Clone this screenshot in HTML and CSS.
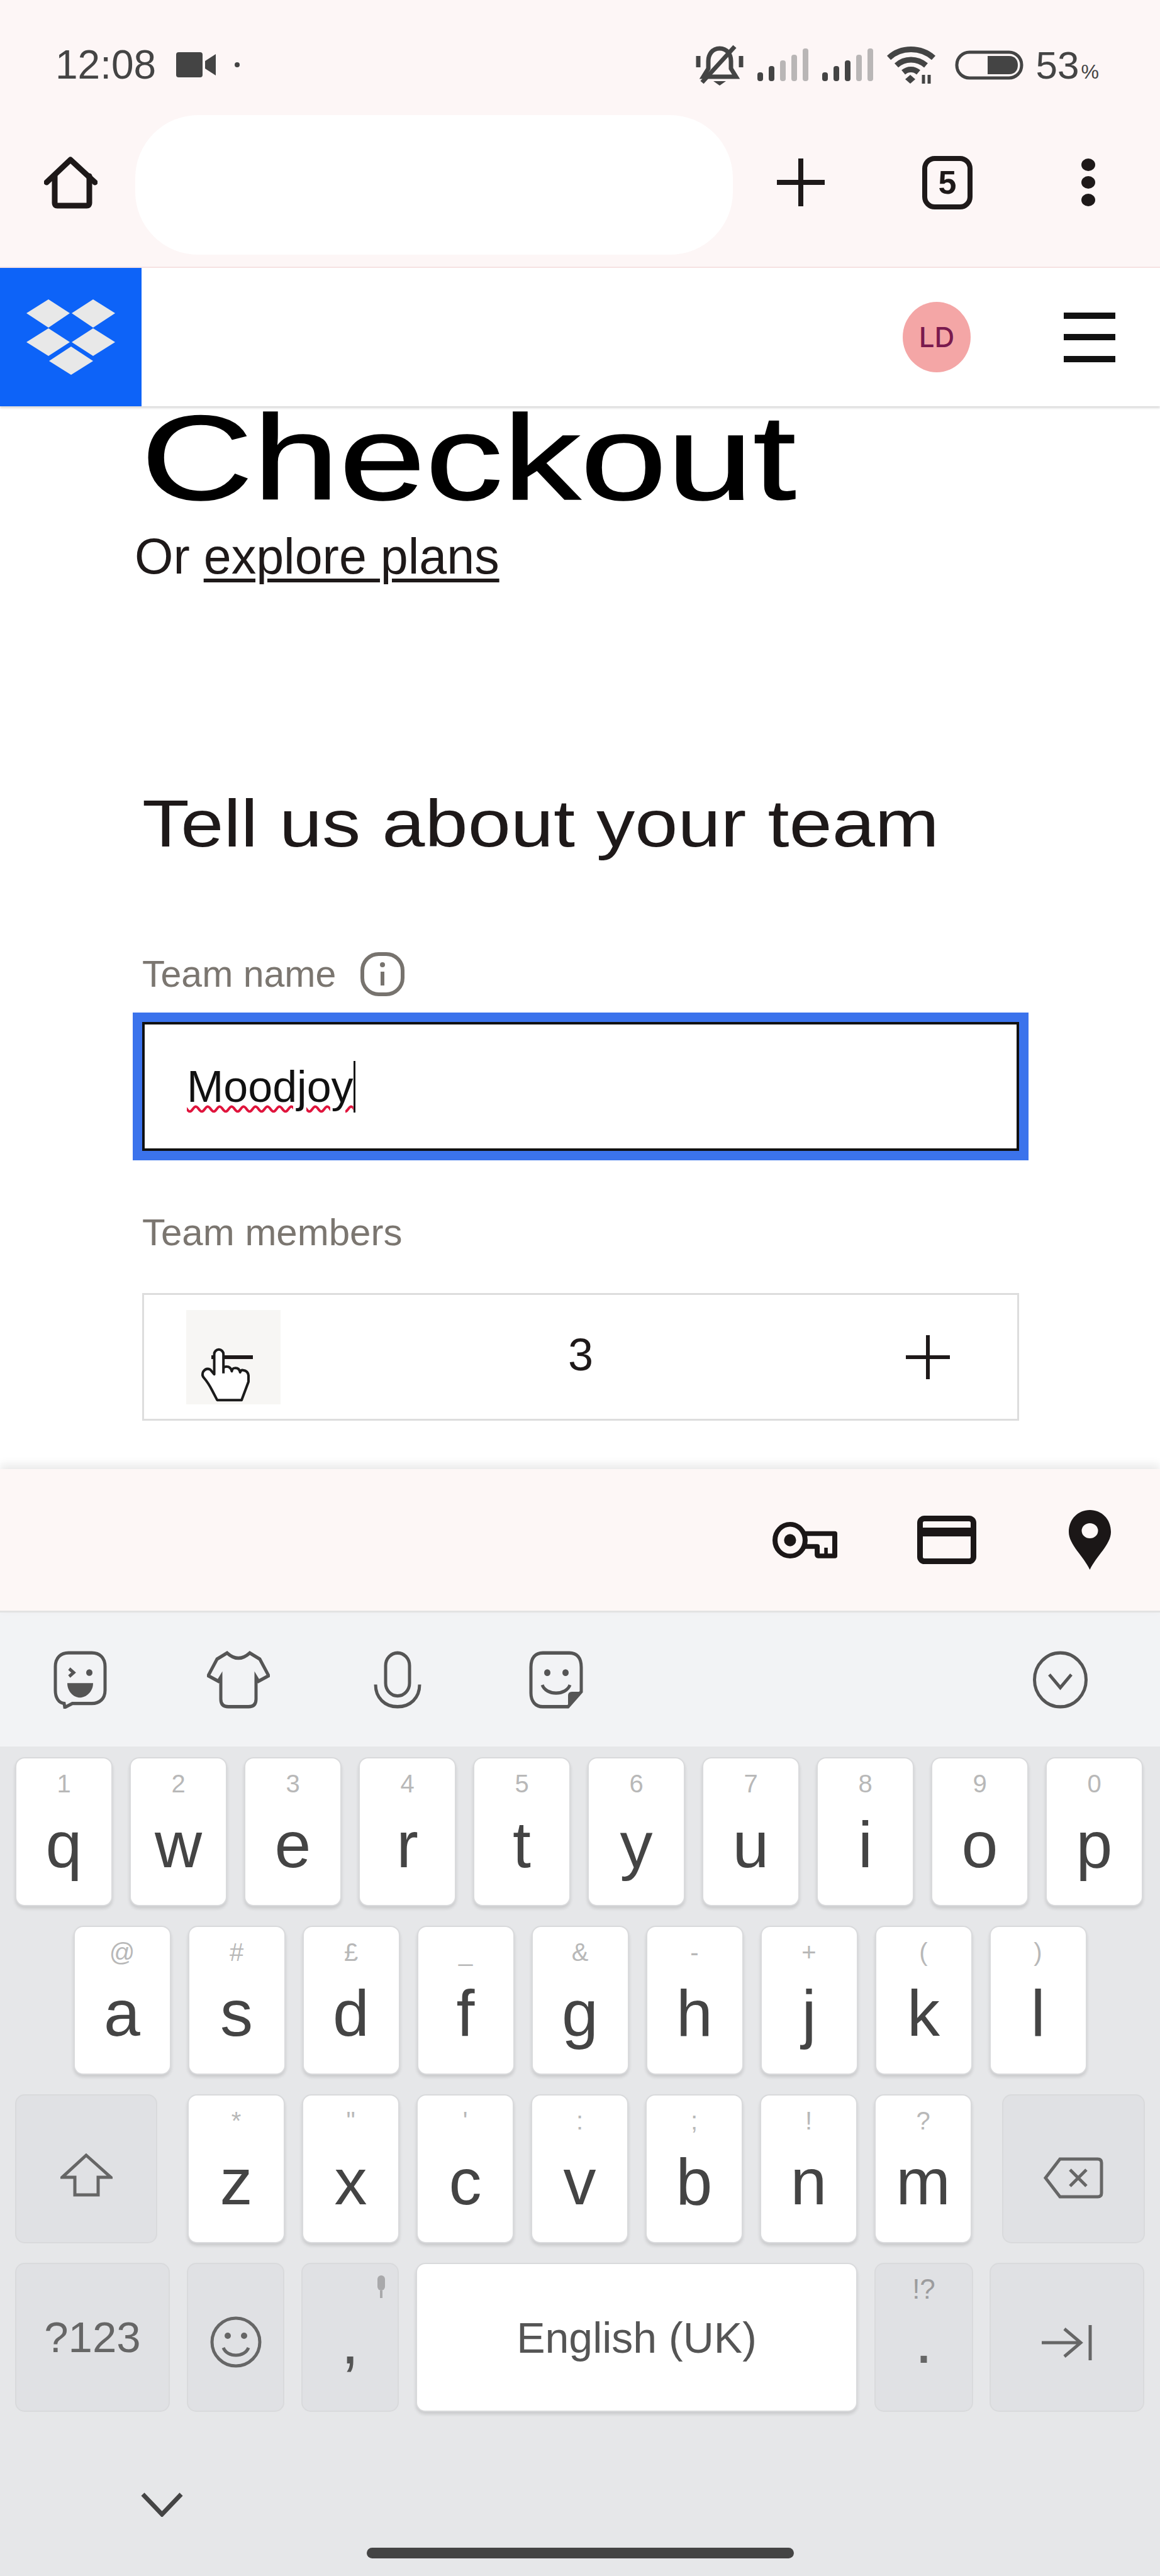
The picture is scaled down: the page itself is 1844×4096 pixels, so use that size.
FILE: index.html
```html
<!DOCTYPE html>
<html lang="en">
<head>
    <meta charset="UTF-8">
    <title>Checkout</title>
    <link rel="stylesheet" href="styles.css">
</head>
<body>

<div class="chrome">
    <div class="status-bar">
        <span class="time">12:08</span>
        <svg class="cam-icon" viewBox="0 0 63 40"><rect x="0" y="0" width="42" height="40" rx="4"/><path d="M46 14 63 3V37L46 26Z"/></svg>
        <span class="status-dot"></span>
        <div class="status-right">
            <svg class="bell-icon" viewBox="0 0 76 65"><path d="M38 6C26 6 20 16 20 26V38L12 51H64L56 38V26C56 16 50 6 38 6Z"/><path d="M10 60 62 3" class="slash"/><path d="M4 18V36M72 18V36" class="ticks"/><path d="M28 58H48L38 65Z" class="fill"/></svg>
            <svg class="signal-icon" viewBox="0 0 81 52"><rect x="0" y="38" width="9" height="14" rx="4"/><rect x="18" y="28" width="9" height="24" rx="4"/><rect class="off" x="36" y="19" width="9" height="33" rx="4"/><rect class="off" x="54" y="10" width="9" height="42" rx="4"/><rect class="off" x="72" y="0" width="9" height="52" rx="4"/></svg>
            <svg class="signal-icon" viewBox="0 0 81 52"><rect x="0" y="38" width="9" height="14" rx="4"/><rect x="18" y="28" width="9" height="24" rx="4"/><rect x="36" y="19" width="9" height="33" rx="4"/><rect class="off" x="54" y="10" width="9" height="42" rx="4"/><rect class="off" x="72" y="0" width="9" height="52" rx="4"/></svg>
            <svg class="wifi-icon" viewBox="0 0 79 60"><path d="M3 19C22 1 54 1 74 19" /><path d="M15 31C28 19 48 19 62 31"/><path d="M26 42C33 36 43 36 50 42"/><path class="fill" d="M37 46 45 53 37 60 29 53Z"/><path d="M58 46V60M67 46V60" class="thin"/></svg>
            <svg class="battery-icon" viewBox="0 0 109 47"><rect x="3" y="3" width="103" height="41" rx="20"/><path class="fill" d="M52 9H86C96 9 100 16 100 23.500S96 38 86 38H52Z"/></svg>
            <span class="battery-text">53<small>%</small></span>
        </div>
    </div>
    <div class="toolbar">
        <svg class="home-icon" viewBox="0 0 85 85"><path d="M4 42 42 6 81 42"/><path d="M17 32V75Q17 79 21 79H68Q72 79 72 75V32"/></svg>
        <div class="url-pill"></div>
        <svg class="plus-icon" viewBox="0 0 76 76"><path d="M38 0V76M0 38H76"/></svg>
        <div class="tabs-count">5</div>
        <div class="menu-dots"><span></span><span></span><span></span></div>
    </div>
</div>

<div class="site-nav">
    <div class="logo-box">
        <svg class="logo" viewBox="42 473 141 120">
            <path d="M42 495 77 473 111 495 77 518Z"/>
            <path d="M114 495 148 473 183 495 148 518Z"/>
            <path d="M42 541 77 519 111 541 77 563Z"/>
            <path d="M114 541 148 519 183 541 148 563Z"/>
            <path d="M78 571 113 548 148 571 113 593Z"/>
        </svg>
    </div>
    <div class="avatar">LD</div>
    <div class="burger"><span></span><span></span><span></span></div>
</div>

<div class="page">
    <h1>Checkout</h1>
    <p class="explore">Or <a href="#">explore plans</a></p>
    <h2>Tell us about your team</h2>

    <div class="field-label">Team name
        <svg class="info-icon" viewBox="0 0 72 72"><rect x="4" y="4" width="64" height="64" rx="26"/><path d="M36 32V54"/><circle cx="36" cy="21" r="4"/></svg>
    </div>
    <div class="team-input"><span class="typed">Moodjoy</span><span class="caret"></span></div>

    <div class="field-label members-label">Team members</div>
    <div class="stepper">
        <div class="step-btn minus"><svg class="step-icon" viewBox="0 0 70 70"><path d="M0 35H66"/></svg></div>
        <span class="step-value">3</span>
        <div class="step-btn"><svg class="step-icon" viewBox="0 0 70 70"><path d="M35 0V70M0 35H70"/></svg></div>
        <svg class="hand" viewBox="230 325 250 270"><path d="M345 450V358a22 22 0 0 0-44 0V455L282 432Q262 422 248 442 240 458 252 472 272 495 290 530L315 578H432L465 490V460Q462 438 440 435 428 433 425 445 420 422 398 425 388 425 385 440 380 418 360 418 348 418 345 425"/></svg>
    </div>
</div>

<div class="autofill">
    <svg class="key-icon" viewBox="80 100 258 156" preserveAspectRatio="none"><ellipse cx="150" cy="178" rx="60" ry="68"/><ellipse class="fill" cx="150" cy="178" rx="24" ry="26"/><path d="M205 150H328V245H262Q258 245 258 240V205H205"/><path d="M293 210V240" class="tooth"/></svg>
    <svg class="card-icon" viewBox="0 0 94 77"><rect x="4.500" y="4.500" width="85" height="68" rx="7"/><path d="M4 26H90" class="band"/></svg>
    <svg class="pin-icon" viewBox="0 0 67 95"><path fill-rule="evenodd" d="M33.500 0C15 0 0 14 0 35 0 55 24 74 33.500 95 43 74 67 55 67 35 67 14 52 0 33.500 0ZM33.500 21A13 12 0 1 1 33.500 45 13 12 0 1 1 33.500 21Z"/></svg>
</div>

<div class="kb-tools">
    <svg class="tool-icon t-face" viewBox="0 0 85 88" preserveAspectRatio="none"><path d="M24 3H61C73 3 82 10 82 24V60C82 73 73 80 61 80H30L18 86 17 80C8 79 3 71 3 60V24C3 10 12 3 24 3Z"/><path d="M25 27 32 33 25 39" /><circle class="fill" cx="57" cy="33" r="5"/><path class="fill" d="M22 49H63C63 62 52 71 42 71S22 62 22 49Z"/></svg>
    <svg class="tool-icon t-shirt" viewBox="0 0 100 84" preserveAspectRatio="none"><path d="M32 3 Q50 18 68 3L84 12 98 36 82 44 78 38V70Q78 81 66 81H34Q22 81 22 70V38L18 44 2 36 16 12Z"/></svg>
    <svg class="tool-icon t-mic" viewBox="0 0 76 86" preserveAspectRatio="none"><rect x="19" y="3" width="38" height="64" rx="19"/><path d="M3 50C3 70 18 83 38 83S73 70 73 50"/></svg>
    <svg class="tool-icon t-sticker" viewBox="0 0 86 85" preserveAspectRatio="none"><path d="M22 3H64C76 3 83 10 83 24V60L62 82H22C10 82 3 74 3 62V24C3 10 10 3 22 3Z"/><circle class="fill" cx="29" cy="32" r="5"/><circle class="fill" cx="58" cy="32" r="5"/><path d="M21 50C27 66 59 66 65 50"/><path class="fill" d="M83 60 62 82V66Q62 60 68 60Z"/></svg>
    <svg class="tool-icon t-chevron" viewBox="0 0 91 88" preserveAspectRatio="none"><circle cx="45.500" cy="44" r="41"/><path d="M28 36 45.500 56 63 36"/></svg>
</div>

<div class="keyboard">
    <div class="kb-row">
        <div class="key"><span class="hint">1</span><span class="letter">q</span></div>
        <div class="key"><span class="hint">2</span><span class="letter">w</span></div>
        <div class="key"><span class="hint">3</span><span class="letter">e</span></div>
        <div class="key"><span class="hint">4</span><span class="letter">r</span></div>
        <div class="key"><span class="hint">5</span><span class="letter">t</span></div>
        <div class="key"><span class="hint">6</span><span class="letter">y</span></div>
        <div class="key"><span class="hint">7</span><span class="letter">u</span></div>
        <div class="key"><span class="hint">8</span><span class="letter">i</span></div>
        <div class="key"><span class="hint">9</span><span class="letter">o</span></div>
        <div class="key"><span class="hint">0</span><span class="letter">p</span></div>
    </div>
    <div class="kb-row row-center">
        <div class="key"><span class="hint">@</span><span class="letter">a</span></div>
        <div class="key"><span class="hint">#</span><span class="letter">s</span></div>
        <div class="key"><span class="hint">£</span><span class="letter">d</span></div>
        <div class="key"><span class="hint">_</span><span class="letter">f</span></div>
        <div class="key"><span class="hint">&amp;</span><span class="letter">g</span></div>
        <div class="key"><span class="hint">-</span><span class="letter">h</span></div>
        <div class="key"><span class="hint">+</span><span class="letter">j</span></div>
        <div class="key"><span class="hint">(</span><span class="letter">k</span></div>
        <div class="key"><span class="hint">)</span><span class="letter">l</span></div>
    </div>
    <div class="kb-row">
        <div class="key func shift-key">
            <svg class="func-icon shift-icon" viewBox="0 0 83 69"><path d="M41 3 80 38H60V66H23V38H3Z"/></svg>
        </div>
        <div class="key after-wide"><span class="hint">*</span><span class="letter">z</span></div>
        <div class="key"><span class="hint">"</span><span class="letter">x</span></div>
        <div class="key"><span class="hint">'</span><span class="letter">c</span></div>
        <div class="key"><span class="hint">:</span><span class="letter">v</span></div>
        <div class="key"><span class="hint">;</span><span class="letter">b</span></div>
        <div class="key"><span class="hint">!</span><span class="letter">n</span></div>
        <div class="key"><span class="hint">?</span><span class="letter">m</span></div>
        <div class="key func del-key after-wide">
            <svg class="func-icon del-icon" viewBox="0 0 95 66"><path d="M26 3H86Q92 3 92 9V57Q92 63 86 63H26L3 33Z"/><path d="M42 20 68 46M68 20 42 46"/></svg>
        </div>
    </div>
    <div class="kb-row">
        <div class="key func num-key">?123</div>
        <div class="key func small-func">
            <svg class="func-icon emoji-icon" viewBox="0 0 82 82"><circle cx="41" cy="41" r="38"/><circle class="fill" cx="28" cy="31" r="5"/><circle class="fill" cx="54" cy="31" r="5"/><path d="M21 50C27 66 55 66 61 50"/></svg>
        </div>
        <div class="key func small-func comma-key">,
            <svg class="kb-mic" viewBox="0 0 24 36"><rect x="6" y="0" width="12" height="24" rx="6"/><path d="M12 24V36" class="mic-stem"/></svg>
        </div>
        <div class="key space-key">English (UK)</div>
        <div class="key func dot-key"><span class="hint">!?</span><span class="letter">.</span></div>
        <div class="key func enter-key">
            <svg class="func-icon enter-icon" viewBox="0 0 80 56"><path d="M0 28H60M36 6 62 28 36 50M77 0V56"/></svg>
        </div>
    </div>
    <svg class="kb-hide" viewBox="0 0 69 39"><path d="M4 3 34.500 35 65 3"/></svg>
    <div class="home-bar"></div>
</div>

</body>
</html>
```

FILE: styles.css
```css
* {
    box-sizing: border-box;
}
body {
    margin: 0;
    width: 1844px;
    height: 4096px;
    display: flex;
    flex-direction: column;
    overflow: hidden;
    background: white;
    font-family: "Liberation Sans", Arial, sans-serif;
    color: #1e1919;
}
svg {
    display: block;
    flex: none;
}

/* browser chrome */
.chrome {
    height: 426px;
    background-color: #fdf6f6;
    border-bottom: 2px solid #f6e2e2;
}
.status-bar {
    height: 176px;
    padding: 30px 97px 0 88px;
    display: flex;
    align-items: center;
    color: #444;
}
.time {
    font-size: 64px;
}
.cam-icon {
    width: 63px;
    height: 40px;
    margin-left: 32px;
    fill: #444;
}
.status-dot {
    width: 8px;
    height: 8px;
    margin-left: 30px;
    border-radius: 50%;
    background-color: #444;
}
.status-right {
    margin-left: auto;
    display: flex;
    align-items: center;
}
.bell-icon {
    width: 76px;
    height: 65px;
    fill: none;
    stroke: #444;
    stroke-width: 7;
}
.bell-icon .fill, .wifi-icon .fill, .battery-icon .fill {
    fill: #444;
    stroke: none;
}
.signal-icon {
    width: 81px;
    height: 52px;
    margin-left: 22px;
    fill: #444;
}
.signal-icon .off {
    fill: #b9b6b6;
}
.wifi-icon {
    width: 79px;
    height: 60px;
    margin-left: 22px;
    fill: none;
    stroke: #444;
    stroke-width: 9;
}
.wifi-icon .thin {
    stroke-width: 5;
}
.battery-icon {
    width: 109px;
    height: 47px;
    margin-left: 29px;
    fill: none;
    stroke: #444;
    stroke-width: 5;
}
.battery-text {
    margin-left: 20px;
    font-size: 62px;
}
.battery-text small {
    font-size: 32px;
    margin-left: 3px;
}

.toolbar {
    height: 248px;
    padding: 0 0 20px 70px;
    display: flex;
    align-items: center;
}
.home-icon {
    width: 85px;
    height: 85px;
    fill: none;
    stroke: #1e1919;
    stroke-width: 9;
    stroke-linecap: round;
    stroke-linejoin: round;
}
.url-pill {
    width: 950px;
    height: 222px;
    margin: 8px 0 0 60px;
    background: white;
    border-radius: 100px;
}
.plus-icon {
    width: 76px;
    height: 76px;
    margin-left: 70px;
    fill: none;
    stroke: #1e1919;
    stroke-width: 8;
}
.tabs-count {
    width: 80px;
    height: 85px;
    margin-left: 155px;
    border: 8px solid #1e1919;
    border-radius: 20px;
    display: flex;
    align-items: center;
    justify-content: center;
    font-size: 52px;
    font-weight: bold;
}
.menu-dots {
    height: 76px;
    margin-left: 173px;
    display: flex;
    flex-direction: column;
    justify-content: space-between;
}
.menu-dots span {
    width: 22px;
    height: 20px;
    border-radius: 50%;
    background-color: #1e1919;
}

/* site header */
.site-nav {
    height: 220px;
    flex: none;
    display: flex;
    align-items: center;
    background: white;
    box-shadow: 0 3px 3px rgba(0, 0, 0, 0.14);
    position: relative;
    z-index: 1;
}
.logo-box {
    width: 225px;
    height: 100%;
    background-color: #0d63f8;
    display: flex;
    align-items: center;
    justify-content: center;
}
.logo {
    width: 141px;
    height: 120px;
    fill: #e8e8e8;
}
.avatar {
    width: 108px;
    height: 112px;
    margin-left: auto;
    border-radius: 50%;
    background-color: #f4a6a6;
    color: #7a1a4e;
    font-size: 44px;
    font-family: Inter, sans-serif;
    font-weight: 500;
    display: flex;
    align-items: center;
    justify-content: center;
}
.burger {
    width: 82px;
    height: 79px;
    margin: 0 71px 0 148px;
    display: flex;
    flex-direction: column;
    justify-content: space-between;
}
.burger span {
    height: 10px;
    background-color: #111;
}

/* checkout content, the headings are a stretched grotesque in the original */
.page {
    flex: 1;
    padding: 2px 0 0 226px;
    background: white;
}
h1 {
    width: fit-content;
    margin: 0 0 0 -2px;
    font-size: 192px;
    font-weight: 400;
    line-height: 160px;
    color: #000;
    -webkit-text-stroke: 1.5px #000;
    transform: scaleX(1.284);
    transform-origin: left;
}
.explore {
    margin: 32px 0 0 -12px;
    font-size: 79px;
    line-height: 90px;
}
.explore a {
    color: #1e1919;
    text-decoration-thickness: 6px;
    text-underline-offset: 8px;
}
h2 {
    width: fit-content;
    margin: 319px 0 0;
    font-size: 106px;
    font-weight: 400;
    line-height: 120px;
    transform: scaleX(1.156);
    transform-origin: left;
}
.field-label {
    margin-top: 145px;
    height: 70px;
    display: flex;
    align-items: center;
    gap: 38px;
    font-size: 59px;
    line-height: 70px;
    color: #7b7670;
}
.info-icon {
    width: 72px;
    height: 72px;
    fill: none;
    stroke: #77736e;
    stroke-width: 6;
}
.info-icon circle {
    fill: #77736e;
    stroke: none;
}
.team-input {
    width: 1394px;
    height: 205px;
    margin-top: 41px;
    padding-left: 67px;
    border: 4px solid #111;
    outline: 15px solid #3b73ec;
    display: flex;
    align-items: center;
    font-size: 70px;
    color: #111;
}
.typed {
    text-decoration: underline wavy #e0143c 4px;
    text-underline-offset: 6px;
}
.caret {
    width: 3px;
    height: 82px;
    background-color: #111;
}
.members-label {
    margin-top: 95px;
    font-size: 60px;
}
.stepper {
    width: 1394px;
    height: 203px;
    margin-top: 61px;
    padding: 0 67px;
    border: 3px solid #ddd;
    display: flex;
    align-items: center;
    justify-content: space-between;
    position: relative;
}
.step-btn {
    width: 150px;
    height: 150px;
    display: flex;
    align-items: center;
    justify-content: center;
}
.step-btn.minus {
    background-color: #f7f6f4;
}
.step-icon {
    width: 70px;
    height: 70px;
    fill: none;
    stroke: #1e1919;
    stroke-width: 6;
}
.step-value {
    font-size: 72px;
    margin-top: -8px;
}
.hand {
    position: absolute;
    left: 88px;
    top: 83px;
    width: 83px;
    height: 90px;
    fill: white;
    stroke: #1b1b1b;
    stroke-width: 12;
    stroke-linejoin: round;
}

/* password and address bar above keyboard */
.autofill {
    height: 228px;
    flex: none;
    padding-right: 78px;
    border-bottom: 3px solid #e3e3e3;
    background-color: #fdf7f6;
    box-shadow: 0 -7px 14px rgba(0, 0, 0, 0.09);
    display: flex;
    align-items: center;
    justify-content: flex-end;
    position: relative;
}
.key-icon {
    width: 103px;
    height: 58px;
    fill: none;
    stroke: #1b1717;
    stroke-width: 20;
    stroke-linejoin: round;
}
.key-icon .fill {
    fill: #1b1717;
    stroke: none;
}
.key-icon .tooth {
    stroke-width: 14;
}
.card-icon {
    width: 94px;
    height: 77px;
    margin-left: 127px;
    fill: none;
    stroke: #1b1717;
    stroke-width: 9;
}
.card-icon .band {
    stroke-width: 14;
}
.pin-icon {
    width: 67px;
    height: 95px;
    margin-left: 147px;
    fill: #1b1717;
}

/* keyboard */
.kb-tools {
    height: 213px;
    flex: none;
    display: flex;
    align-items: center;
    background-color: #f2f3f5;
}
.tool-icon {
    height: 92px;
    fill: none;
    stroke: #555;
    stroke-width: 5;
}
.tool-icon .fill {
    fill: #555;
    stroke: none;
}
.t-face {
    width: 85px;
    margin-left: 85px;
}
.t-shirt {
    width: 100px;
    margin-left: 159px;
}
.t-mic {
    width: 76px;
    margin-left: 165px;
}
.t-sticker {
    width: 86px;
    margin-left: 171px;
}
.t-chevron {
    width: 91px;
    margin-left: auto;
    margin-right: 113px;
}
.keyboard {
    height: 1319px;
    flex: none;
    padding: 17px 24px 0;
    display: flex;
    flex-direction: column;
    gap: 31px;
    background-color: #e6e7e9;
}
.kb-row {
    height: 237px;
    display: flex;
    gap: 27px;
}
.row-center {
    justify-content: center;
}
.key {
    width: 155px;
    height: 237px;
    flex: none;
    padding-top: 10px;
    background: white;
    border: 2px solid #d9dadc;
    border-radius: 15px;
    box-shadow: 0 4px 5px rgba(0, 0, 0, 0.12);
    display: flex;
    flex-direction: column;
    align-items: center;
    color: #444;
    position: relative;
}
.hint {
    height: 60px;
    font-size: 40px;
    line-height: 60px;
    color: #b8b8b8;
}
.letter {
    height: 120px;
    margin-top: 7px;
    font-size: 104px;
    line-height: 120px;
}
.func {
    padding-top: 0;
    background-color: #e0e1e4;
    box-shadow: none;
    justify-content: center;
    color: #666;
}
.shift-key {
    width: 226px;
}
.del-key {
    width: 227px;
}
.after-wide {
    margin-left: 21px;
}
.func-icon {
    fill: none;
    stroke: #666;
    stroke-width: 5;
}
.func-icon .fill {
    fill: #666;
    stroke: none;
}
.shift-icon {
    width: 83px;
    height: 69px;
    margin-top: 20px;
}
.del-icon {
    width: 95px;
    height: 66px;
    margin-top: 28px;
}
.num-key {
    width: 246px;
    font-size: 69px;
}
.small-func {
    width: 155px;
}
.emoji-icon {
    width: 82px;
    height: 82px;
    margin-top: 14px;
}
.comma-key {
    padding-top: 12px;
    font-size: 104px;
    color: #555;
}
.kb-mic {
    position: absolute;
    top: 18px;
    right: 14px;
    width: 24px;
    height: 36px;
    fill: #a9a9ab;
}
.mic-stem {
    stroke: #a9a9ab;
    stroke-width: 4;
}
.space-key {
    width: 702px;
    padding-top: 0;
    justify-content: center;
    font-size: 68px;
    color: #555;
}
.dot-key {
    width: 157px;
    padding-top: 10px;
    justify-content: flex-start;
}
.dot-key .hint {
    font-size: 44px;
    color: #9c9c9e;
}
.dot-key .letter {
    margin-top: -9px;
    color: #666;
}
.enter-key {
    width: 246px;
    margin-left: -1px;
}
.enter-icon {
    width: 80px;
    height: 56px;
    margin-top: 16px;
}
.kb-hide {
    width: 69px;
    height: 39px;
    margin: 97px 0 0 199px;
    fill: none;
    stroke: #444;
    stroke-width: 7;
}
.home-bar {
    width: 679px;
    height: 17px;
    margin-top: 18px;
    align-self: center;
    border-radius: 9px;
    background-color: #444;
}
```
